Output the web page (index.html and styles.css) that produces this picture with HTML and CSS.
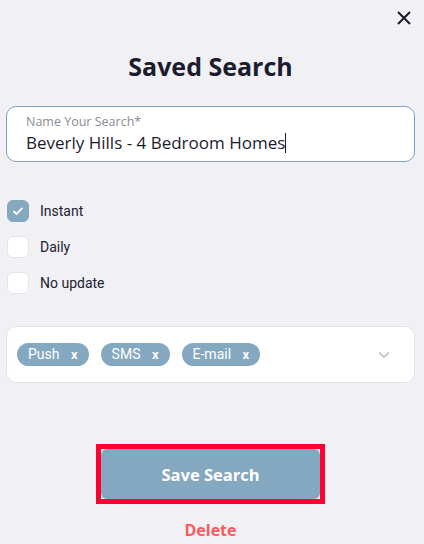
FILE: index.html
```html
<!DOCTYPE html>
<html lang="en">
<head>
    <meta charset="UTF-8">
    <meta name="viewport" content="width=device-width, initial-scale=1.0">
    <title>Saved Search</title>
    <link rel="stylesheet" href="styles.css">
</head>
<body>
    <div class="dialog">
        <button class="close" aria-label="Close">
            <svg width="14" height="14" viewBox="0 0 14 14"><path d="M1 1L13 13M13 1L1 13" stroke="#1c1c28" stroke-width="2"/></svg>
        </button>

        <h1>Saved Search</h1>

        <div class="field">
            <label for="searchName">Name Your Search*</label>
            <div class="value" id="searchName">Beverly Hills - 4 Bedroom Homes<span class="caret"></span></div>
        </div>

        <div class="options">
            <div class="option">
                <span class="box checked">
                    <svg width="12" height="10" viewBox="0 0 12 10"><path d="M1.5 5.2L4.5 8L10.5 1.8" fill="none" stroke="#fff" stroke-width="1.8"/></svg>
                </span>
                Instant
            </div>
            <div class="option"><span class="box"></span>Daily</div>
            <div class="option"><span class="box"></span>No update</div>
        </div>

        <div class="channels">
            <span class="chip">Push <b>x</b></span>
            <span class="chip">SMS <b>x</b></span>
            <span class="chip">E-mail <b>x</b></span>
            <svg class="chevron" width="12" height="8" viewBox="0 0 12 8"><path d="M1 1.5L6 6L11 1.5" fill="none" stroke="#c9c9ce" stroke-width="2"/></svg>
        </div>

        <div class="actions">
            <div class="save-frame">
                <button class="save">Save Search</button>
            </div>
            <button class="delete">Delete</button>
        </div>
    </div>
</body>
</html>
```

FILE: styles.css
```css
body {
    margin: 0;
    background-color: #f0f0f5;
    font-family: "Open Sans", Arial, sans-serif;
    color: #1c1c2e;
}
.dialog {
    position: relative;
    padding: 46px 9px 0 6px;
}
.close {
    position: absolute;
    top: 11px;
    right: 13px;
    padding: 0;
    border: none;
    background: none;
    line-height: 0;
}
h1 {
    margin: 0 0 20px;
    text-align: center;
    font-size: 25px;
    font-weight: 700;
    line-height: 40px;
}
.field {
    background-color: #fff;
    border: 1px solid #82a3c0;
    border-radius: 10px;
    padding: 6px 19px 5px;
    height: 43px;
}
.field label {
    display: block;
    font-size: 12.5px;
    line-height: 18px;
    color: #8a8a96;
}
.value {
    font-size: 17px;
    line-height: 24px;
    color: #1c1c2e;
}
.caret {
    display: inline-block;
    width: 1px;
    height: 20px;
    background-color: #1c1c2e;
    vertical-align: -4px;
}
.options {
    margin: 38px 0 0 1px;
    display: flex;
    flex-direction: column;
    gap: 14px;
    font-family: Roboto, Arial, sans-serif;
    font-size: 14px;
    color: #222230;
}
.option {
    display: flex;
    align-items: center;
    gap: 11px;
}
.box {
    width: 22px;
    height: 22px;
    border-radius: 6px;
    background-color: #fff;
    border: 1px solid #e4e4ea;
    box-sizing: border-box;
    display: flex;
    align-items: center;
    justify-content: center;
}
.box.checked {
    background-color: #84a8c0;
    border-color: #84a8c0;
}
.channels {
    margin-top: 32px;
    background-color: #fff;
    border: 1px solid #e2e2e8;
    border-radius: 10px;
    height: 55px;
    display: flex;
    align-items: center;
    gap: 12px;
    padding: 0 24px 0 10px;
    font-family: Roboto, Arial, sans-serif;
}
.chip {
    background-color: #84a8c0;
    color: #fff;
    font-size: 14px;
    height: 23px;
    line-height: 23px;
    border-radius: 12px;
    padding: 0 11px;
}
.chip b {
    font-size: 13px;
    margin-left: 8px;
}
.chevron {
    margin-left: auto;
}
.actions {
    margin-top: 61px;
    display: flex;
    flex-direction: column;
    align-items: center;
}
.save-frame {
    border: 5px solid #ff0033;
    line-height: 0;
}
.save {
    width: 219px;
    height: 50px;
    border: none;
    border-radius: 6px;
    background-color: #84a8c0;
    color: #fff;
    font-family: inherit;
    font-size: 16.5px;
    font-weight: 700;
}
.delete {
    margin-top: 15px;
    border: none;
    background: none;
    padding: 0;
    font-family: inherit;
    font-size: 16px;
    font-weight: 700;
    color: #f85b5b;
}
```
